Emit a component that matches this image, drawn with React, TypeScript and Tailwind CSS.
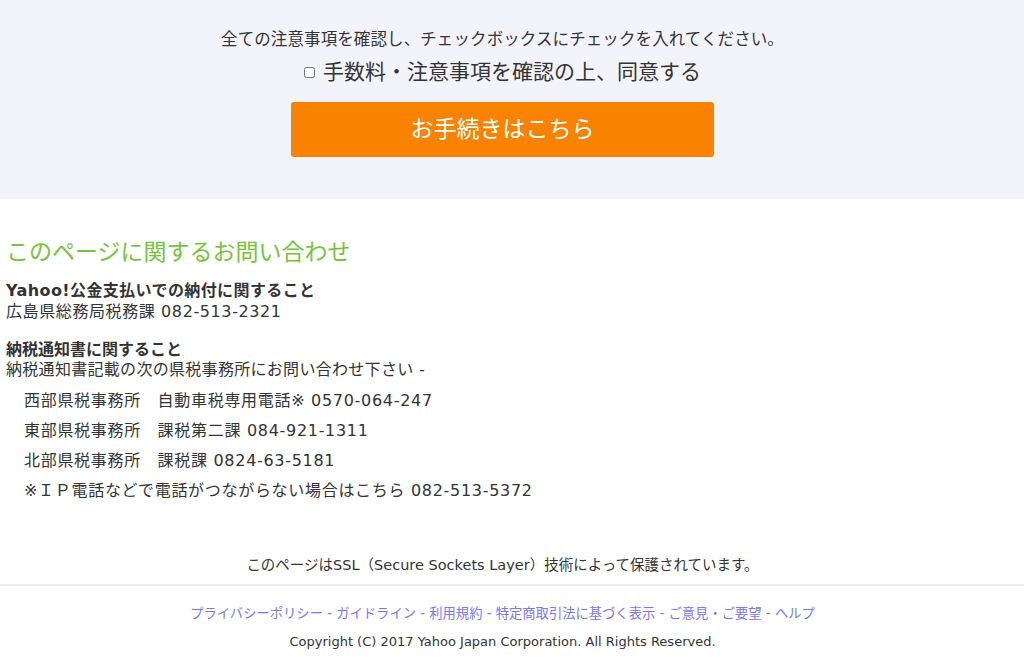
const font = { fontFamily: '"DejaVu Sans", "Noto Sans CJK JP", sans-serif' };

const offices = [
  "西部県税事務所　自動車税専用電話※ 0570-064-247",
  "東部県税事務所　課税第二課 084-921-1311",
  "北部県税事務所　課税課 0824-63-5181",
  "※ＩＰ電話などで電話がつながらない場合はこちら 082-513-5372",
];

const links = ["プライバシーポリシー", "ガイドライン", "利用規約", "特定商取引法に基づく表示", "ご意見・ご要望", "ヘルプ"];

export default function App() {
  return (
    <div className="w-[1024px] h-[658px] overflow-hidden bg-white text-[#333]" style={font}>
      {/* agreement block */}
      <div className="bg-[#f3f3fb] h-[199px]">
        <div className="w-[1005px] flex flex-col items-center pt-[29px]">
          <p className="text-[16.5px] leading-[22px] tracking-[0.1px]">全ての注意事項を確認し、チェックボックスにチェックを入れてください。</p>
          <label className="mt-[9px] flex items-center gap-[8px] text-[21px] leading-[24px]">
            <input type="checkbox" className="w-[11px] h-[11px]" />
            手数料・注意事項を確認の上、同意する
          </label>
          <button className="mt-[18px] w-[423px] h-[55px] rounded-[3px] bg-[#f98200] text-white text-[23px]">
            お手続きはこちら
          </button>
        </div>
      </div>

      {/* contact */}
      <div className="px-[6px] pt-[38px]">
        <h2 className="text-[23px] leading-[30px] text-[#77c33c]">このページに関するお問い合わせ</h2>
        <div className="mt-[13px] text-[16px] leading-[21px]">
          <p className="font-bold tracking-[0.4px]">Yahoo!公金支払いでの納付に関すること</p>
          <p className="tracking-[0.6px]">広島県総務局税務課 082-513-2321</p>
        </div>
        <div className="mt-[18px] text-[16px] leading-[20px]">
          <p className="font-bold">納税通知書に関すること</p>
          <p className="tracking-[0.3px]">納税通知書記載の次の県税事務所にお問い合わせ下さい -</p>
          <ul className="mt-[11px] pl-[18px] flex flex-col gap-[10px] tracking-[0.7px]">
            {offices.map((o) => (
              <li key={o}>{o}</li>
            ))}
          </ul>
        </div>
      </div>

      <p className="w-[1005px] mt-[54px] text-center text-[14.5px] leading-[20px]">
        このページはSSL（Secure Sockets Layer）技術によって保護されています。
      </p>
      <div className="mt-[9px] h-[2px] bg-[#eeeeee]" />
      <div className="w-[1005px] pt-[19px] text-center leading-[18px]">
        <p className="text-[13.3px] text-[#7676ff]">
          {links.map((l, i) => (
            <span key={l}>
              {i > 0 && " - "}
              <a href="#">{l}</a>
            </span>
          ))}
        </p>
        <p className="mt-[10px] text-[13px]">Copyright (C) 2017 Yahoo Japan Corporation. All Rights Reserved.</p>
      </div>
    </div>
  );
}
